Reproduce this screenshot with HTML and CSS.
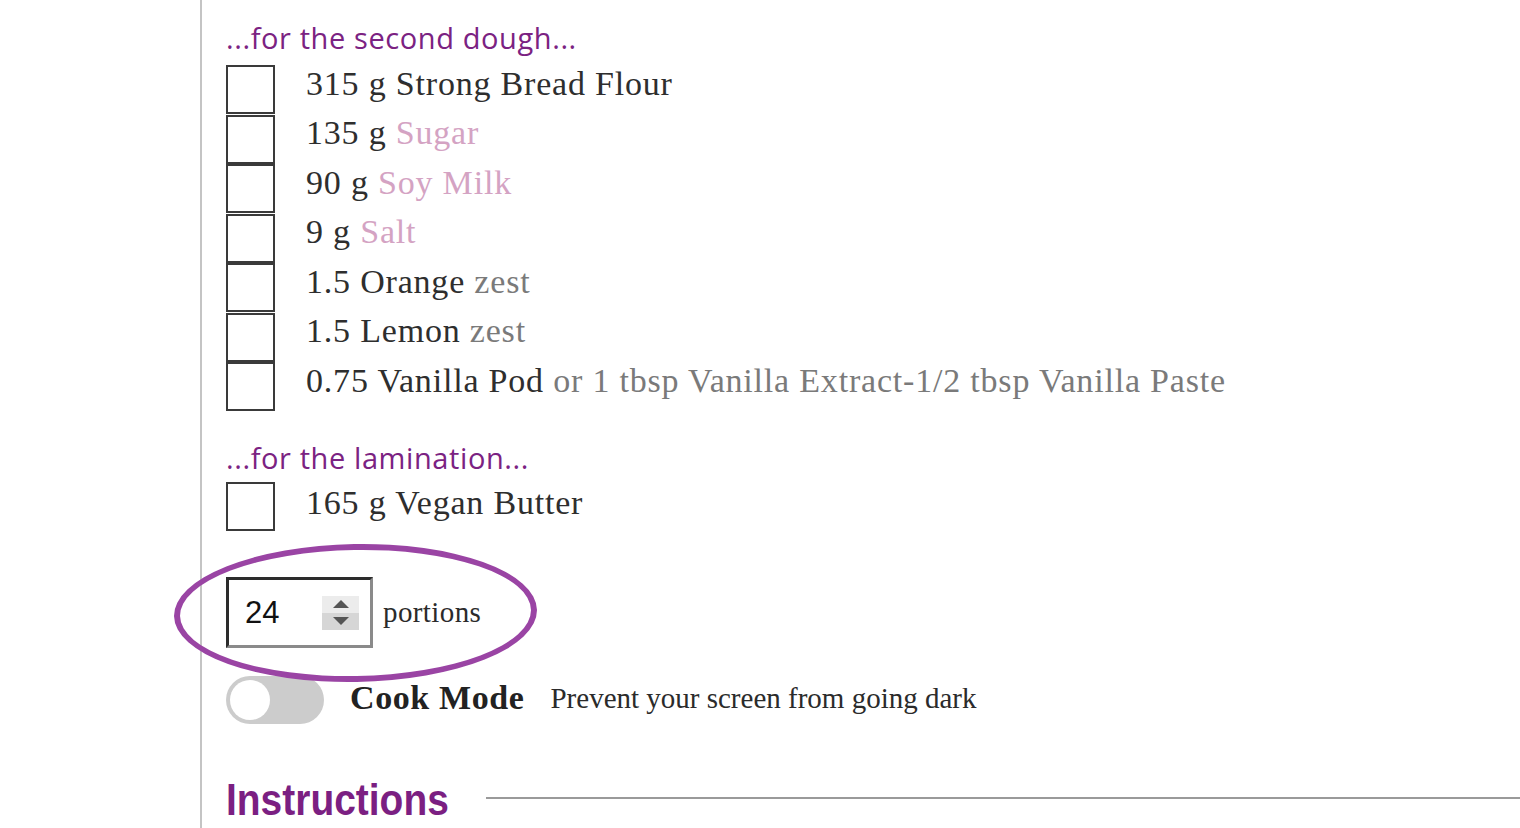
FILE: index.html
```html
<!DOCTYPE html>
<html lang="en">
<head>
<meta charset="utf-8">
<title>Recipe ingredients</title>
<link rel="stylesheet" href="styles.css">
</head>
<body>
<div class="page">
  <div class="recipe">
    <h3 class="group-title">...for the second dough...</h3>
    <ul class="ingredients">
      <li><span class="box"></span><span class="text">315 g Strong Bread Flour</span></li>
      <li><span class="box"></span><span class="text">135 g <span class="link">Sugar</span></span></li>
      <li><span class="box"></span><span class="text">90 g <span class="link">Soy Milk</span></span></li>
      <li><span class="box"></span><span class="text">9 g <span class="link">Salt</span></span></li>
      <li><span class="box"></span><span class="text">1.5 Orange <span class="note">zest</span></span></li>
      <li><span class="box"></span><span class="text">1.5 Lemon <span class="note">zest</span></span></li>
      <li><span class="box"></span><span class="text">0.75 Vanilla Pod <span class="note">or 1 tbsp Vanilla Extract-1/2 tbsp Vanilla Paste</span></span></li>
    </ul>
    <h3 class="group-title second">...for the lamination...</h3>
    <ul class="ingredients tight">
      <li><span class="box"></span><span class="text">165 g Vegan Butter</span></li>
    </ul>

    <div class="servings">
      <div class="num-input">
        <span class="num">24</span>
        <span class="spin"><span class="up"></span><span class="down"></span></span>
      </div>
      <span class="portions">portions</span>
      <span class="ring"></span>
    </div>

    <div class="cookmode">
      <span class="toggle"><span class="knob"></span></span>
      <span class="cm-label">Cook Mode</span>
      <span class="cm-desc">Prevent your screen from going dark</span>
    </div>

    <div class="instr-head">
      <h2 class="instr-title">Instructions</h2>
      <span class="rule"></span>
    </div>
  </div>
</div>
</body>
</html>
```
FILE: styles.css
```css
html, body {
  margin: 0;
  padding: 0;
  background: #fff;
}
.page {
  width: 1520px;
  height: 828px;
  overflow: hidden;
}
.recipe {
  margin-left: 200px;
  border-left: 2px solid #c4c4c4;
  padding-left: 24px;
  padding-top: 18px;
  min-height: 900px;
  font-family: "Liberation Serif", "DejaVu Serif", serif;
  color: #2b2b2b;
}
.group-title {
  margin: 0;
  font-family: "Open Sans", "Noto Sans", sans-serif;
  font-weight: 400;
  font-size: 29px;
  line-height: 40px;
  color: #7b2282;
  letter-spacing: 0.6px;
}
.group-title.second {
  margin-top: 26px;
}
.ingredients {
  list-style: none;
  margin: 7px 0 0 0;
  padding: 0;
}
.ingredients.tight {
  margin-top: 4px;
}
.ingredients li {
  display: flex;
  align-items: center;
  height: 49.5px;
}
.box {
  box-sizing: border-box;
  width: 49px;
  height: 49px;
  border: 2px solid #3a3a3a;
  flex: none;
}
.text {
  margin-left: 31px;
  margin-top: -12px;
  font-size: 34px;
  line-height: 40px;
  letter-spacing: 0.8px;
  color: #2e2e2e;
  white-space: nowrap;
}
.tight .text {
  margin-top: -6px;
}
.link {
  color: #d4a3c3;
}
.note {
  color: #7a7a7a;
}
.servings {
  position: relative;
  display: flex;
  align-items: center;
  margin-top: 46px;
}
.num-input {
  box-sizing: border-box;
  width: 147px;
  height: 71px;
  border: 3px solid #2c2c2c;
  border-right-color: #8a8a8a;
  border-bottom-color: #8a8a8a;
  display: flex;
  align-items: center;
  padding-left: 16px;
}
.num {
  font-family: "Liberation Sans", Arial, sans-serif;
  font-size: 31px;
  color: #111;
  width: 77px;
}
.spin {
  display: flex;
  flex-direction: column;
  width: 37px;
  height: 34px;
}
.spin .up, .spin .down {
  flex: 1;
  display: flex;
  align-items: center;
  justify-content: center;
  background: #ececec;
}
.spin .down {
  background: #d6d6d6;
}
.spin .up::after {
  content: "";
  border-left: 8px solid transparent;
  border-right: 8px solid transparent;
  border-bottom: 8px solid #555;
}
.spin .down::after {
  content: "";
  border-left: 8px solid transparent;
  border-right: 8px solid transparent;
  border-top: 8px solid #555;
}
.portions {
  margin-left: 10px;
  font-size: 29px;
  letter-spacing: 0.4px;
  color: #2b2b2b;
}
.ring {
  position: absolute;
  left: -52px;
  top: -33px;
  width: 351px;
  height: 126px;
  border: 6px solid #9a44a4;
  border-radius: 50%;
  box-sizing: content-box;
  transform: rotate(-1deg);
  pointer-events: none;
}
.cookmode {
  display: flex;
  align-items: center;
  margin-top: 28px;
}
.toggle {
  box-sizing: border-box;
  width: 98px;
  height: 48px;
  border-radius: 24px;
  background: #cccccc;
  padding: 4px;
  flex: none;
}
.knob {
  display: block;
  width: 40px;
  height: 40px;
  border-radius: 50%;
  background: #fff;
}
.cm-label {
  margin-left: 26px;
  margin-top: -4px;
  font-size: 34px;
  letter-spacing: 0.6px;
  font-weight: 700;
  color: #222;
}
.cm-desc {
  margin-left: 26px;
  margin-top: -4px;
  font-size: 29px;
  color: #2b2b2b;
}
.instr-head {
  display: flex;
  align-items: center;
  margin-top: 51px;
}
.instr-title {
  margin: 0;
  display: inline-block;
  font-family: "Liberation Sans", Arial, sans-serif;
  font-weight: 700;
  font-size: 44px;
  line-height: 50px;
  color: #7b1f82;
  transform: scaleX(0.885);
  transform-origin: left center;
}
.rule {
  flex: 1;
  height: 2px;
  background: #9a9a9a;
  margin-left: 8px;
  margin-top: -4px;
}
```
